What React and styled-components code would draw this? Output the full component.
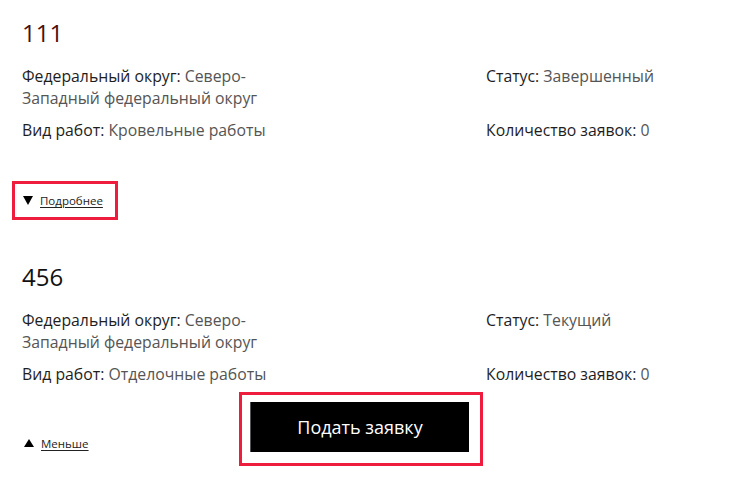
import React from "react";
import styled, { createGlobalStyle } from "styled-components";

const Global = createGlobalStyle`
  html, body { margin: 0; padding: 0; background: #fff; }
  body { font-family: "Open Sans", "Noto Sans", Arial, sans-serif; color: #222; }
`;

const Page = styled.div`
  width: 731px;
  height: 491px;
  box-sizing: border-box;
  padding: 19px 0 0 22px;
  overflow: hidden;
`;

const Card = styled.section`
  display: flex;
  flex-direction: column;
  margin-bottom: ${(p) => p.$gap || 0}px;
`;

const Title = styled.h2`
  margin: 0 0 18px;
  font-size: 24px;
  line-height: 28px;
  font-weight: 400;
  color: ${(p) => p.$color || "#111"};
`;

const InfoGrid = styled.div`
  display: grid;
  grid-template-columns: 464px 1fr;
  row-gap: 10px;
`;

const Field = styled.div`
  font-size: 15.8px;
  line-height: 22px;
  color: #1e1e1e;
  max-width: 250px;
`;

const Value = styled.span`
  color: #555;
`;

const Highlight = styled.div`
  display: inline-flex;
  align-self: flex-start;
  border: 3px solid #ee1d3e;
  padding: ${(p) => p.$pad};
  margin-left: ${(p) => p.$shift || 0}px;
`;

const Footer = styled.div`
  margin-top: ${(p) => p.$top}px;
  display: flex;
  align-items: flex-end;
`;

const Toggle = styled.a`
  display: inline-flex;
  align-items: center;
  gap: 7px;
  font-size: 11.5px;
  line-height: 17px;
  color: #222;
  cursor: pointer;
`;

const ToggleLabel = styled.span`
  text-decoration: underline;
  text-underline-offset: 2px;
`;

const Arrow = styled.span`
  width: 0;
  height: 0;
  margin-left: ${(p) => (p.$up ? 2 : 0)}px;
  border-left: 5px solid transparent;
  border-right: 5px solid transparent;
  ${(p) =>
    p.$up
      ? "border-bottom: 8px solid #000;"
      : "border-top: 9px solid #000;"}
`;

const LessWrap = styled.div`
  width: 217px;
  margin-bottom: 14px;
`;

const SubmitButton = styled.button`
  width: 219px;
  height: 50px;
  background: #000;
  color: #fff;
  border: none;
  border-left: 1px solid #555;
  font-family: "Open Sans", "Noto Sans", Arial, sans-serif;
  font-size: 18px;
  cursor: pointer;
`;

const cards = [
  {
    id: "111",
    color: "#4d0d0d",
    district: "Северо-Западный федеральный округ",
    work: "Кровельные работы",
    status: "Завершенный",
    count: 0,
  },
  {
    id: "456",
    color: "#111",
    district: "Северо-Западный федеральный округ",
    work: "Отделочные работы",
    status: "Текущий",
    count: 0,
  },
];

function Info({ c }) {
  return (
    <InfoGrid>
      <Field>
        Федеральный округ: <Value>{c.district}</Value>
      </Field>
      <Field>
        Статус: <Value>{c.status}</Value>
      </Field>
      <Field>
        Вид работ: <Value>{c.work}</Value>
      </Field>
      <Field>
        Количество заявок: <Value>{c.count}</Value>
      </Field>
    </InfoGrid>
  );
}

export default function App() {
  const [a, b] = cards;
  return (
    <>
      <Global />
      <Page>
        <Card $gap={43}>
          <Title $color={a.color}>{a.id}</Title>
          <Info c={a} />
          <Footer $top={40}>
            <Highlight $pad="8px 12px 8px 8px" $shift={-10}>
              <Toggle>
                <Arrow />
                <ToggleLabel>Подробнее</ToggleLabel>
              </Toggle>
            </Highlight>
          </Footer>
        </Card>
        <Card>
          <Title $color={b.color}>{b.id}</Title>
          <Info c={b} />
          <Footer $top={7}>
            <LessWrap>
              <Toggle>
                <Arrow $up />
                <ToggleLabel>Меньше</ToggleLabel>
              </Toggle>
            </LessWrap>
            <Highlight $pad="7px 11px 11px 8px">
              <SubmitButton>Подать заявку</SubmitButton>
            </Highlight>
          </Footer>
        </Card>
      </Page>
    </>
  );
}
